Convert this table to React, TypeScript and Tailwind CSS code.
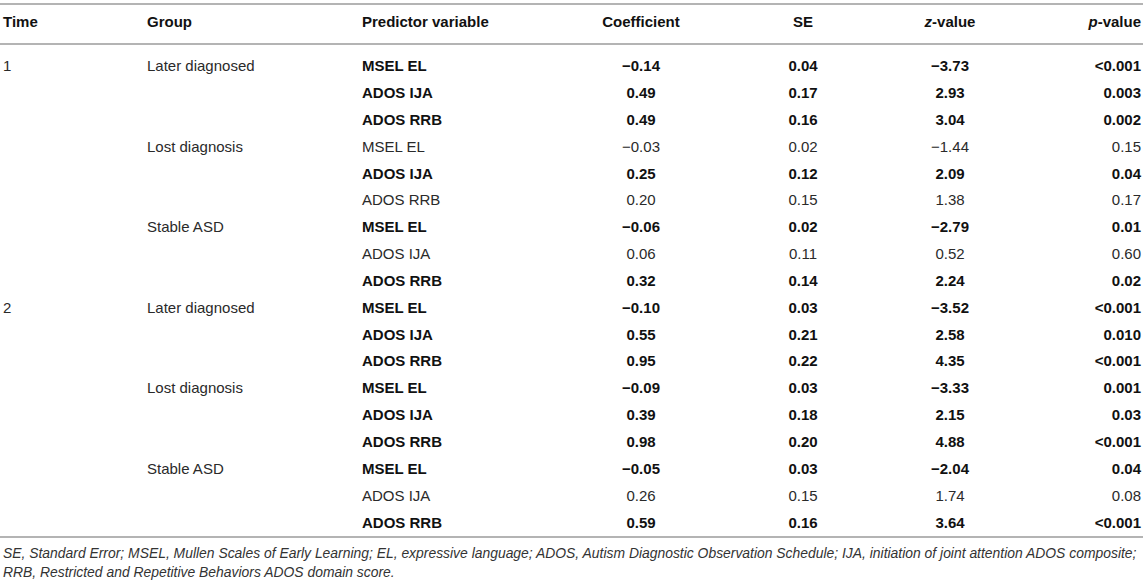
import React from "react";

type Row = {
  time?: string;
  group?: string;
  pred: string;
  coef: string;
  se: string;
  z: string;
  p: string;
  bold: boolean;
};

const rows: Row[] = [
  { time: "1", group: "Later diagnosed", pred: "MSEL EL", coef: "−0.14", se: "0.04", z: "−3.73", p: "<0.001", bold: true },
  { pred: "ADOS IJA", coef: "0.49", se: "0.17", z: "2.93", p: "0.003", bold: true },
  { pred: "ADOS RRB", coef: "0.49", se: "0.16", z: "3.04", p: "0.002", bold: true },
  { group: "Lost diagnosis", pred: "MSEL EL", coef: "−0.03", se: "0.02", z: "−1.44", p: "0.15", bold: false },
  { pred: "ADOS IJA", coef: "0.25", se: "0.12", z: "2.09", p: "0.04", bold: true },
  { pred: "ADOS RRB", coef: "0.20", se: "0.15", z: "1.38", p: "0.17", bold: false },
  { group: "Stable ASD", pred: "MSEL EL", coef: "−0.06", se: "0.02", z: "−2.79", p: "0.01", bold: true },
  { pred: "ADOS IJA", coef: "0.06", se: "0.11", z: "0.52", p: "0.60", bold: false },
  { pred: "ADOS RRB", coef: "0.32", se: "0.14", z: "2.24", p: "0.02", bold: true },
  { time: "2", group: "Later diagnosed", pred: "MSEL EL", coef: "−0.10", se: "0.03", z: "−3.52", p: "<0.001", bold: true },
  { pred: "ADOS IJA", coef: "0.55", se: "0.21", z: "2.58", p: "0.010", bold: true },
  { pred: "ADOS RRB", coef: "0.95", se: "0.22", z: "4.35", p: "<0.001", bold: true },
  { group: "Lost diagnosis", pred: "MSEL EL", coef: "−0.09", se: "0.03", z: "−3.33", p: "0.001", bold: true },
  { pred: "ADOS IJA", coef: "0.39", se: "0.18", z: "2.15", p: "0.03", bold: true },
  { pred: "ADOS RRB", coef: "0.98", se: "0.20", z: "4.88", p: "<0.001", bold: true },
  { group: "Stable ASD", pred: "MSEL EL", coef: "−0.05", se: "0.03", z: "−2.04", p: "0.04", bold: true },
  { pred: "ADOS IJA", coef: "0.26", se: "0.15", z: "1.74", p: "0.08", bold: false },
  { pred: "ADOS RRB", coef: "0.59", se: "0.16", z: "3.64", p: "<0.001", bold: true },
];

const grid =
  "grid grid-cols-[144px_215px_198px_162px_162px_132px_125px] pl-[3px] pr-[2px]";

export default function App() {
  return (
    <div
      className="w-[1143px] h-[584px] bg-white overflow-hidden text-[#2a2a2a]"
      style={{ fontFamily: '"Liberation Sans", Arial, sans-serif' }}
    >
      <div className="mt-[3px] border-t-2 border-[#b4b4b4]">
        <div className={`${grid} h-[38px] items-center pb-[4px] text-[15px] font-bold text-[#111]`}>
          <div>Time</div>
          <div>Group</div>
          <div>Predictor variable</div>
          <div className="text-center">Coefficient</div>
          <div className="text-center">SE</div>
          <div className="text-center">
            <i>z</i>-value
          </div>
          <div className="text-right">
            <i>p</i>-value
          </div>
        </div>
        <div className="border-t-2 border-[#b4b4b4] pt-[8px] border-b-2">
          {rows.map((r, i) => (
            <div key={i} className={`${grid} h-[26.85px] items-center text-[15px]`}>
              <div>{r.time ?? ""}</div>
              <div>{r.group ?? ""}</div>
              <div className={r.bold ? "font-bold text-[#111]" : ""}>{r.pred}</div>
              <div className={`text-center ${r.bold ? "font-bold text-[#111]" : ""}`}>{r.coef}</div>
              <div className={`text-center ${r.bold ? "font-bold text-[#111]" : ""}`}>{r.se}</div>
              <div className={`text-center ${r.bold ? "font-bold text-[#111]" : ""}`}>{r.z}</div>
              <div className={`text-right ${r.bold ? "font-bold text-[#111]" : ""}`}>{r.p}</div>
            </div>
          ))}
        </div>
      </div>
      <div className="pl-[3px] pt-[6px] text-[13.9px] leading-[19px] italic text-[#333]">
        <div className="whitespace-nowrap">
          SE, Standard Error; MSEL, Mullen Scales of Early Learning; EL, expressive language; ADOS, Autism Diagnostic Observation Schedule; IJA, initiation of joint attention ADOS composite;
        </div>
        <div className="whitespace-nowrap">RRB, Restricted and Repetitive Behaviors ADOS domain score.</div>
      </div>
    </div>
  );
}
